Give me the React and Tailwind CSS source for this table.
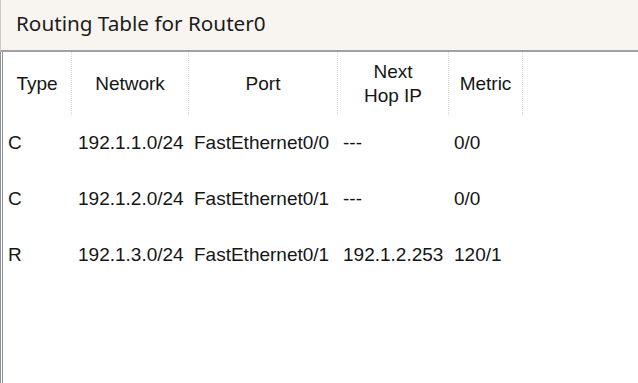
import React from 'react';

const routes = [
    { type: 'C', network: '192.1.1.0/24', port: 'FastEthernet0/0', nextHop: '---', metric: '0/0' },
    { type: 'C', network: '192.1.2.0/24', port: 'FastEthernet0/1', nextHop: '---', metric: '0/0' },
    { type: 'R', network: '192.1.3.0/24', port: 'FastEthernet0/1', nextHop: '192.1.2.253', metric: '120/1' },
];

const cols = 'grid grid-cols-[69px_117px_149px_111px_74px]';

const App = () => {
    return (
        <div className="w-[638px] h-[383px] bg-white flex flex-col overflow-hidden text-[#151515]">
            {/* window title */}
            <div className="h-[52px] shrink-0 bg-[#f8f4f0] border-l border-l-[#c9cbce] border-b-2 border-b-[#9ea2a8] pl-[15px] pt-[8px] font-['Noto_Sans',sans-serif] text-[20.7px] leading-[30px] text-[#1c1c1c]">
                Routing Table for Router0
            </div>

            <div className="flex-1 border-l-[3px] border-double border-l-[#8f949a] font-['Liberation_Sans',Arial,sans-serif] text-[19px] leading-[24px]">
                {/* column headers */}
                <div className={`${cols} h-[63px]`}>
                    <div className="flex items-center justify-center border-r border-dotted border-r-[#d4d4d4]">Type</div>
                    <div className="flex items-center justify-center border-r border-dotted border-r-[#d4d4d4]">Network</div>
                    <div className="flex items-center justify-center border-r border-dotted border-r-[#d4d4d4]">Port</div>
                    <div className="flex items-center justify-center text-center border-r border-dotted border-r-[#d4d4d4]">Next<br />Hop IP</div>
                    <div className="flex items-center justify-center border-r border-dotted border-r-[#d4d4d4]">Metric</div>
                </div>

                {/* route entries */}
                {routes.map((r, i) => (
                    <div key={i} className={`${cols} h-[56px] items-center`}>
                        <div className="pl-[5px]">{r.type}</div>
                        <div className="pl-[6px] whitespace-nowrap">{r.network}</div>
                        <div className="pl-[5px] whitespace-nowrap">{r.port}</div>
                        <div className="pl-[5px] whitespace-nowrap">{r.nextHop}</div>
                        <div className="pl-[5px]">{r.metric}</div>
                    </div>
                ))}
            </div>
        </div>
    );
};

export default App;
